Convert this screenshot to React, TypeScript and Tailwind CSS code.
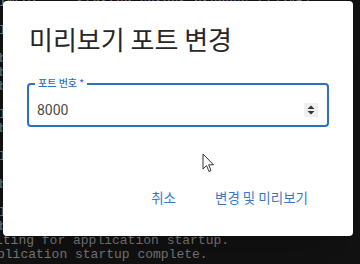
import React from "react";

const termLines = [
  "INFO:     Started server process [12345]",
  "    at Object.run (node:internal/main:1)",
  "INFO:     Uvicorn running on http://0.0.0.0",
  "    at Module._compile (node:internal)",
  "bash: warning: setlocale: LC_ALL",
  "bash: warning: setlocale: LC_ALL",
  "bash: warning: setlocale: LC_ALL",
  "    at processTicksAndRejections",
  "INFO:     Started reloader process",
  "bash: warning: setlocale: LC_ALL",
  "    at listOnTimeout (node:internal)",
  "INFO:     Will watch for changes",
  "    at Timeout._onTimeout",
  "bash: warning: setlocale: LC_ALL",
  "    at async Promise.all",
  "INFO:     Application startup",
  "bash: warning: setlocale: LC_ALL",
];

export default function App() {
  return (
    <div className="relative w-[360px] h-[264px] overflow-hidden bg-[#121212]">
      <div
        className="absolute inset-0 flex flex-col justify-end pb-[2px] text-[13px] leading-[14px] text-[#7d7d7d] whitespace-pre"
        style={{ fontFamily: '"Liberation Mono", monospace' }}
      >
        {termLines.map((l, i) => (
          <div key={i} className="ml-[-1px]">{l}</div>
        ))}
        <div className="ml-[-5px]">iting for application startup.</div>
        <div className="ml-[-3px]">plication startup complete.</div>
      </div>

      <div
        className="absolute left-[3px] top-[1px] w-[350px] h-[235px] bg-white rounded-[4px] shadow-2xl flex flex-col px-6"
        style={{ fontFamily: '"Noto Sans CJK KR", Roboto, "Noto Sans", sans-serif' }}
      >
        <div className="mt-[18px] pl-[2px] text-[26px] leading-[40px] text-[#262626]">
          미리보기 포트 변경
        </div>

        <div className="mt-[24px] relative h-[44px] border-2 border-[#2f6fbf] rounded-[4px] flex items-center pt-[9px] pl-[8px] pr-[9px]">
          <div className="absolute left-[6px] top-[-9px] bg-white px-[3px] text-[10px] leading-[14px] font-medium text-[#2c6fc4]">
            포트 번호 *
          </div>
          <div
            className="flex-1 text-[14px] leading-[18px] text-[#4a4a4a]"
            style={{ fontFamily: "Roboto, sans-serif" }}
          >
            8000
          </div>
          <div className="w-[14px] h-[14px] bg-[#efefef] flex items-center justify-center">
            <svg width="8" height="10" viewBox="0 0 8 10">
              <path d="M4 0.5 L7.5 4 L0.5 4 Z" fill="#333" />
              <path d="M4 9.5 L7.5 6 L0.5 6 Z" fill="#333" />
            </svg>
          </div>
        </div>

        <div className="mt-[60px] flex justify-end items-center gap-[39px] pr-[21px] text-[13.5px] leading-[20px] text-[#3a79c6]">
          <span>취소</span>
          <span>변경 및 미리보기</span>
        </div>

        <svg
          className="absolute left-[199px] top-[152px]"
          width="14"
          height="21"
          viewBox="0 0 14 21"
        >
          <path
            d="M1 1 L1 16 L4.5 12.5 L7 18.5 L9 17.5 L6.7 11.8 L11.5 11.8 Z"
            fill="white"
            stroke="#333"
            strokeWidth="1"
            strokeLinejoin="round"
          />
        </svg>
      </div>
    </div>
  );
}
